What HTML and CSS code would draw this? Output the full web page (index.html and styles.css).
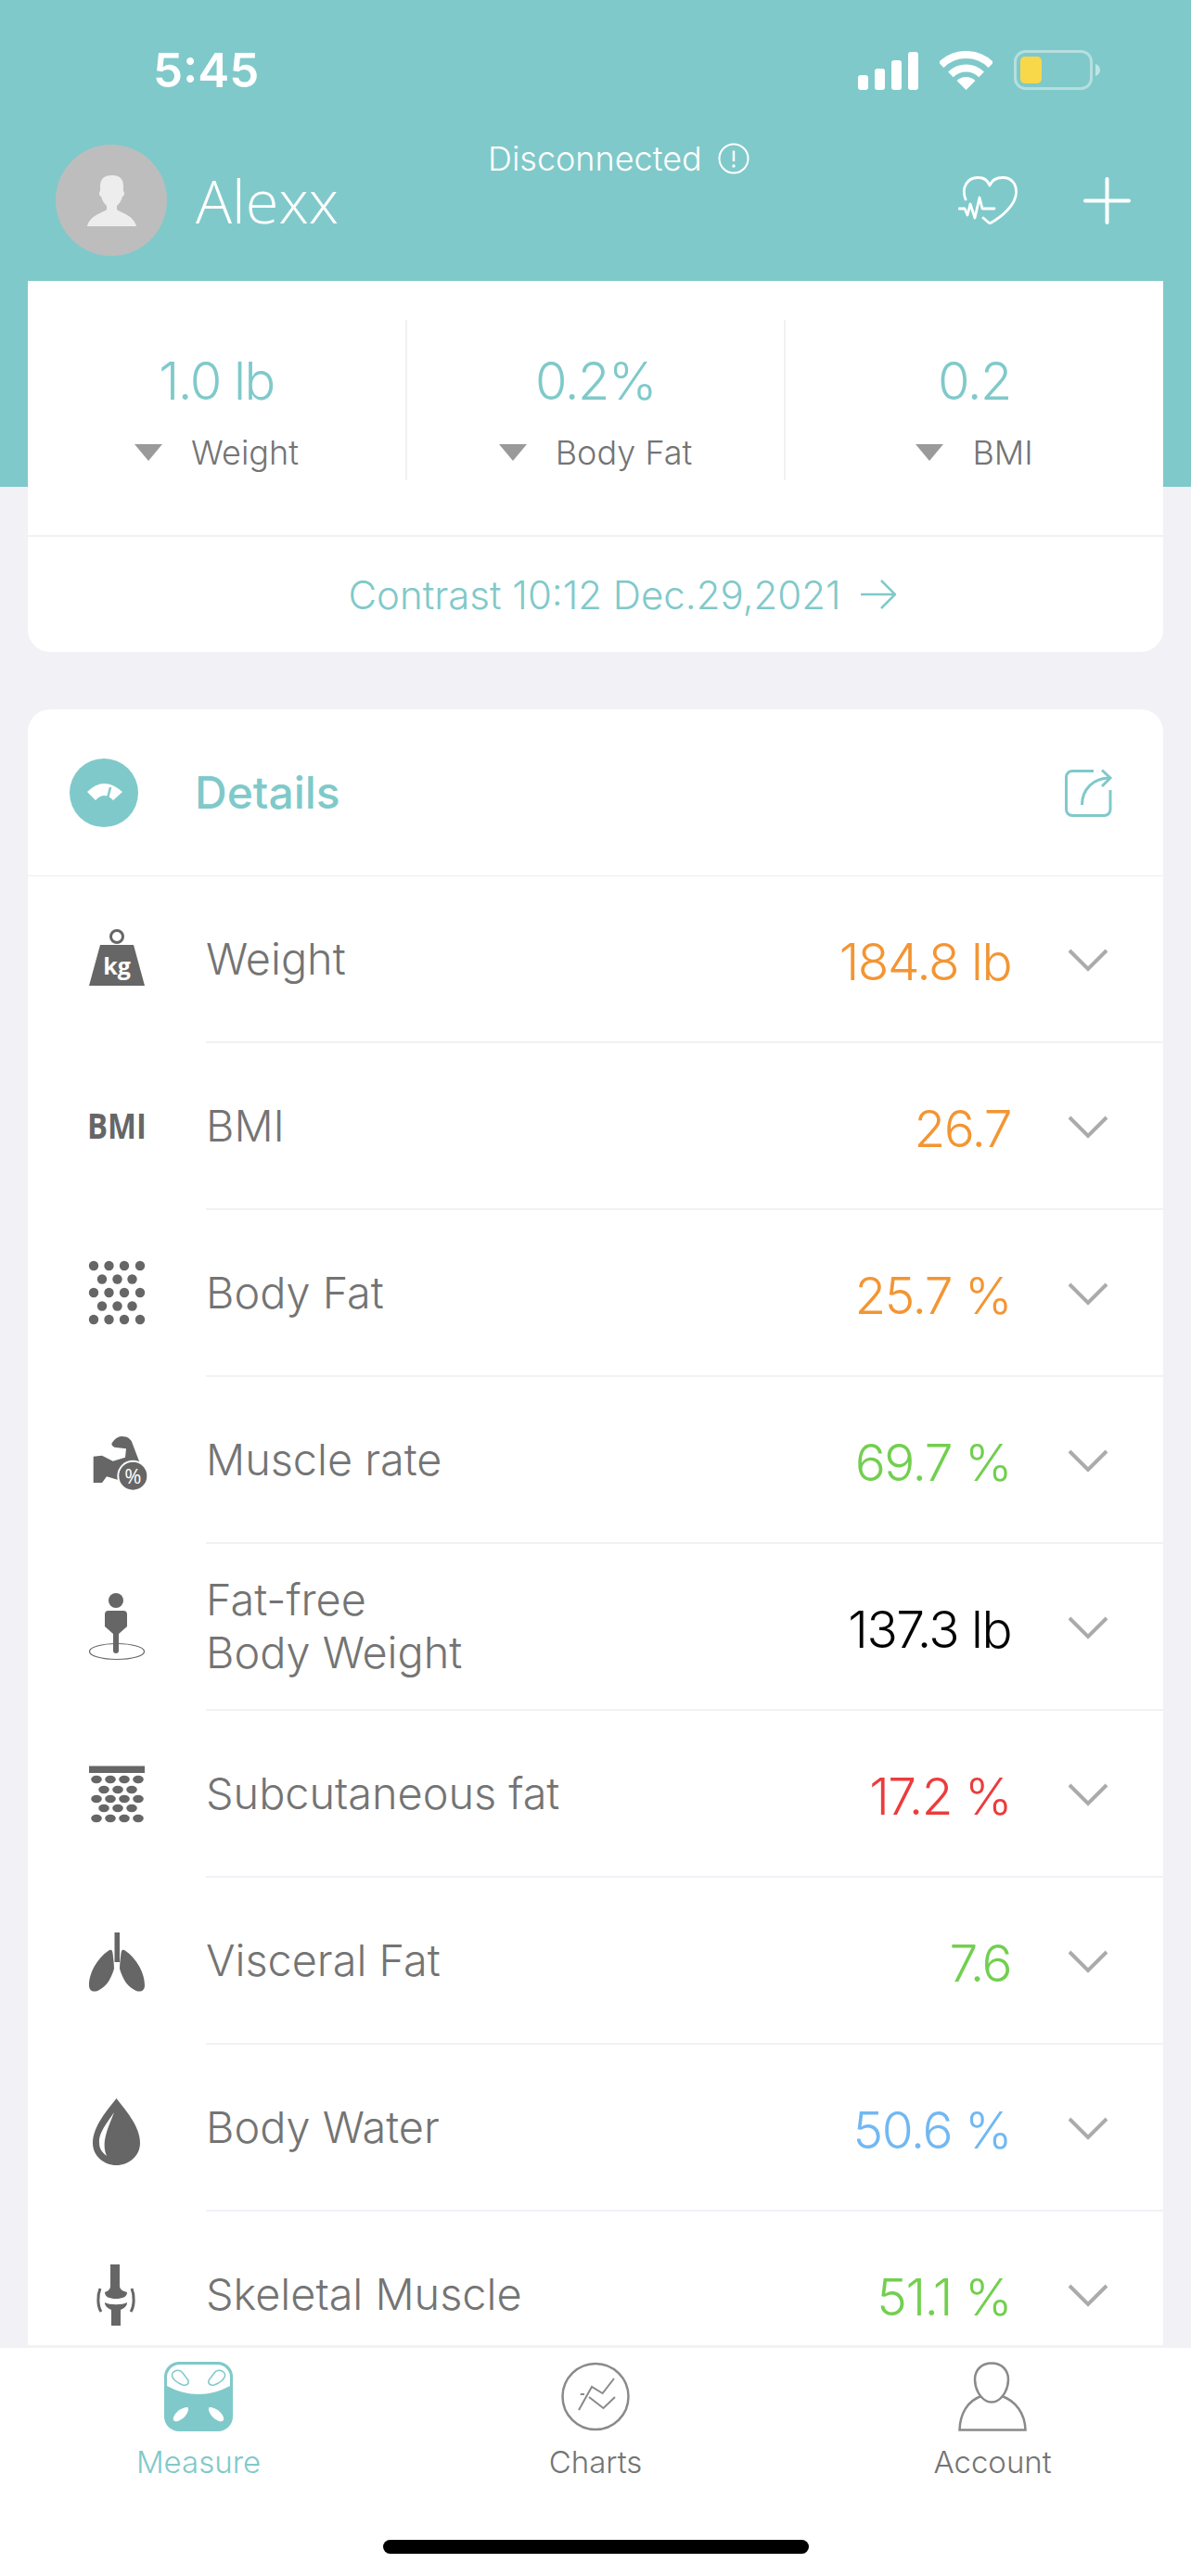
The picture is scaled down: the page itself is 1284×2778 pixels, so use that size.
FILE: index.html
```html
<!DOCTYPE html>
<html lang="en">

<head>
    <meta charset="UTF-8">
    <meta name="viewport" content="width=device-width, initial-scale=1.0">
    <title>Measure</title>
    <link rel="stylesheet" href="styles.css">
</head>

<body>
    <div class="app">

        <header class="top">
            <div class="status-bar">
                <span class="clock">5:45</span>
                <svg class="signal" width="65" height="41" viewBox="0 0 65 41">
                    <rect x="0" y="25" width="11" height="16" rx="3" />
                    <rect x="18" y="18" width="11" height="23" rx="3" />
                    <rect x="36" y="9" width="11" height="32" rx="3" />
                    <rect x="54" y="0" width="11" height="41" rx="3" />
                </svg>
                <svg class="wifi" width="57" height="42" viewBox="0 0 57 42">
                    <path d="M1.6 15.1A38 38 0 0 1 55.4 15.1" fill="none" stroke="#fff" stroke-width="8" />
                    <path d="M11.9 25.4A23.5 23.5 0 0 1 45.1 25.4" fill="none" stroke="#fff" stroke-width="8" />
                    <path d="M28.5 42L18.6 32.1A14 14 0 0 1 38.4 32.1Z" fill="#fff" />
                </svg>
                <svg class="battery" width="93" height="43" viewBox="0 0 93 43">
                    <rect x="1.5" y="1.5" width="82" height="40" rx="11" fill="none" stroke="#fff" stroke-opacity=".42" stroke-width="3" />
                    <rect x="7" y="7" width="23" height="29" rx="5" fill="#f8d749" />
                    <path d="M88 15c3 1 5 3.500 5 6.500s-2 5.500-5 6.500z" fill="#fff" fill-opacity=".5" />
                </svg>
            </div>

            <div class="nav">
                <div class="user">
                    <svg class="avatar" width="120" height="120" viewBox="0 0 120 120">
                        <circle cx="60" cy="60" r="60" fill="#bdbdbd" />
                        <path d="M61 33C52 33 48 37 48 45V50C46 52 47 55 49 56C50 60 52 63 55 66V70C50 74 37 76 34 88H87C84 76 71 74 66 70V66C69 63 71 60 72 56C74 55 75 52 73 50V45C73 37 69 33 61 33Z" fill="#ededed" />
                    </svg>
                    <span class="user-name">Alexx</span>
                </div>
                <div class="link-state">
                    <span>Disconnected</span>
                    <svg width="34" height="34" viewBox="0 0 34 34">
                        <circle cx="17" cy="17" r="15.500" fill="none" stroke="#fff" stroke-width="2" />
                        <path d="M17 8.500V20" stroke="#fff" stroke-width="2.500" />
                        <circle cx="17" cy="25" r="1.700" fill="#fff" />
                    </svg>
                </div>
                <div class="actions">
                    <svg width="64" height="52" viewBox="0 0 64 52" fill="none" stroke="#fff" stroke-width="2.800" stroke-linecap="round" stroke-linejoin="round">
                        <path d="M8 25C3 12 10 1 22 1.500C28 1.500 32 5 34 10C36 5 41 1.500 48 1.500C58 1.500 63 9 62.500 18C62 31 47 44 34 51L27 45" />
                        <path d="M1 35H7L10 42L13 30L18 45L23 23L26 35H39" />
                    </svg>
                    <svg width="51" height="51" viewBox="0 0 51 51" fill="none" stroke="#fff" stroke-width="4" stroke-linecap="round">
                        <path d="M25.500 2V49M2 25.500H49" />
                    </svg>
                </div>
            </div>
        </header>

        <section class="summary">
            <div class="stats">
                <div class="stat">
                    <div class="stat-value">1.0 lb</div>
                    <div class="stat-label"><i class="down"></i>Weight</div>
                </div>
                <div class="stat">
                    <div class="stat-value">0.2%</div>
                    <div class="stat-label"><i class="down"></i>Body Fat</div>
                </div>
                <div class="stat">
                    <div class="stat-value">0.2</div>
                    <div class="stat-label"><i class="down"></i>BMI</div>
                </div>
            </div>
            <div class="contrast">
                <span>Contrast 10:12 Dec.29,2021</span>
                <svg width="38" height="32" viewBox="0 0 38 32" fill="none" stroke="#80c9ca" stroke-width="2.500">
                    <path d="M0 16H36M22 1L37 16L22 31" />
                </svg>
            </div>
        </section>

        <section class="details">
            <div class="details-head">
                <svg width="74" height="74" viewBox="0 0 74 74">
                    <circle cx="37" cy="37" r="37" fill="#80c9ca" />
                    <path d="M19 36Q37 18 57 36L47 45Q37 35 28 45Z" fill="#fff" />
                    <path d="M44 31L41 43" stroke="#80c9ca" stroke-width="2.500" />
                </svg>
                <h2>Details</h2>
                <svg class="share" width="52" height="52" viewBox="0 0 52 52" fill="none" stroke="#80c9ca" stroke-width="3">
                    <path d="M32 2.500H9A6.500 6.500 0 0 0 2.500 9V44A6.500 6.500 0 0 0 9 50.500H43.500A6.500 6.500 0 0 0 50 44V23" />
                    <path d="M19.500 39C19.500 22 32 10 49 10M41 1.500L50 10L41 19" />
                </svg>
            </div>

            <div class="row">
                <svg class="row-icon" viewBox="0 0 70 84">
                    <circle cx="32" cy="17" r="6.500" fill="none" stroke="#666" stroke-width="3" />
                    <path d="M14 26H50L62 70H2Z" />
                    <text class="kg" x="32" y="58" text-anchor="middle">kg</text>
                </svg>
                <div class="row-main">
                    <span class="row-name">Weight</span>
                    <span class="row-value orange">184.8 lb</span>
                    <svg class="chevron" width="44" height="26" viewBox="0 0 44 26"><path d="M2 3L22 23L42 3" /></svg>
                </div>
            </div>

            <div class="row">
                <svg class="row-icon" viewBox="0 0 70 84">
                    <text class="bmi" x="0" y="55" textLength="64" lengthAdjust="spacingAndGlyphs">BMI</text>
                </svg>
                <div class="row-main">
                    <span class="row-name">BMI</span>
                    <span class="row-value orange">26.7</span>
                    <svg class="chevron" width="44" height="26" viewBox="0 0 44 26"><path d="M2 3L22 23L42 3" /></svg>
                </div>
            </div>

            <div class="row">
                <svg class="row-icon" viewBox="0 0 70 84">
                    <circle cx="7" cy="12" r="5.200" /><circle cx="23.500" cy="12" r="5.200" /><circle cx="40" cy="12" r="5.200" /><circle cx="57" cy="12" r="5.200" />
                    <circle cx="16" cy="26.500" r="5.200" /><circle cx="32.500" cy="26.500" r="5.200" /><circle cx="48.500" cy="26.500" r="5.200" />
                    <circle cx="7" cy="41" r="5.200" /><circle cx="23.500" cy="41" r="5.200" /><circle cx="40" cy="41" r="5.200" /><circle cx="57" cy="41" r="5.200" />
                    <circle cx="16" cy="55.500" r="5.200" /><circle cx="32.500" cy="55.500" r="5.200" /><circle cx="48.500" cy="55.500" r="5.200" />
                    <circle cx="7" cy="70" r="5.200" /><circle cx="23.500" cy="70" r="5.200" /><circle cx="40" cy="70" r="5.200" /><circle cx="57" cy="70" r="5.200" />
                </svg>
                <div class="row-main">
                    <span class="row-name">Body Fat</span>
                    <span class="row-value orange">25.7 %</span>
                    <svg class="chevron" width="44" height="26" viewBox="0 0 44 26"><path d="M2 3L22 23L42 3" /></svg>
                </div>
            </div>

            <div class="row">
                <svg class="row-icon" viewBox="0 0 70 84">
                    <path d="M6.700 37.700L16 36.700L27.700 42.700L41 38.700L42 29.300L29.300 27.700C26 26 26 23 27 22.700C31 17 35 16 37.700 16C44 16 46 19 47.700 21L56 42.700L45 66L32.700 62.700L21 59.300L16 66H6.700Z" />
                    <circle cx="49.300" cy="58.700" r="17" fill="#fff" />
                    <circle cx="49.300" cy="58.700" r="15" />
                    <text class="pct" x="49.300" y="66.500" text-anchor="middle">%</text>
                </svg>
                <div class="row-main">
                    <span class="row-name">Muscle rate</span>
                    <span class="row-value green">69.7 %</span>
                    <svg class="chevron" width="44" height="26" viewBox="0 0 44 26"><path d="M2 3L22 23L42 3" /></svg>
                </div>
            </div>

            <div class="row">
                <svg class="row-icon" viewBox="0 0 70 84">
                    <ellipse cx="32" cy="68" rx="29.500" ry="8.500" fill="none" stroke="#666" stroke-width="1.200" />
                    <circle cx="31" cy="13" r="8" />
                    <path d="M23 24H39A4 4 0 0 1 43 28V41L34 49V67A3 3 0 0 1 28 67V49L19 41V28A4 4 0 0 1 23 24Z" />
                </svg>
                <div class="row-main">
                    <span class="row-name">Fat-free<br>Body Weight</span>
                    <span class="row-value black">137.3 lb</span>
                    <svg class="chevron" width="44" height="26" viewBox="0 0 44 26"><path d="M2 3L22 23L42 3" /></svg>
                </div>
            </div>

            <div class="row">
                <svg class="row-icon" viewBox="0 0 70 84">
                    <rect x="2" y="11.500" width="60" height="7.500" />
                    <ellipse cx="10" cy="26" rx="5.800" ry="4.200" /><ellipse cx="25" cy="26" rx="5.800" ry="4.200" /><ellipse cx="40" cy="26" rx="5.800" ry="4.200" /><ellipse cx="55" cy="26" rx="5.800" ry="4.200" />
                    <ellipse cx="18" cy="37" rx="5.800" ry="4.200" /><ellipse cx="33" cy="37" rx="5.800" ry="4.200" /><ellipse cx="48" cy="37" rx="5.800" ry="4.200" />
                    <ellipse cx="10" cy="47" rx="5.800" ry="4.200" /><ellipse cx="25" cy="47" rx="5.800" ry="4.200" /><ellipse cx="40" cy="47" rx="5.800" ry="4.200" /><ellipse cx="55" cy="47" rx="5.800" ry="4.200" />
                    <ellipse cx="18" cy="57" rx="5.800" ry="4.200" /><ellipse cx="33" cy="57" rx="5.800" ry="4.200" /><ellipse cx="48" cy="57" rx="5.800" ry="4.200" />
                    <ellipse cx="10" cy="68" rx="5.800" ry="4.200" /><ellipse cx="25" cy="68" rx="5.800" ry="4.200" /><ellipse cx="40" cy="68" rx="5.800" ry="4.200" /><ellipse cx="55" cy="68" rx="5.800" ry="4.200" />
                </svg>
                <div class="row-main">
                    <span class="row-name">Subcutaneous fat</span>
                    <span class="row-value red">17.2 %</span>
                    <svg class="chevron" width="44" height="26" viewBox="0 0 44 26"><path d="M2 3L22 23L42 3" /></svg>
                </div>
            </div>

            <div class="row">
                <svg class="row-icon" viewBox="0 0 70 84">
                    <rect x="29.500" y="11" width="5.500" height="32" />
                    <path d="M24 30C14 36 2 52 2 68C2 75 8 76 13 73C22 68 26 60 29 50C29 45 28 38 27.500 33C27 30 26 29 24 30Z" />
                    <path d="M40 30C50 36 62 52 62 68C62 75 56 76 51 73C42 68 38 60 35 50C35 45 36 38 36.500 33C37 30 38 29 40 30Z" />
                </svg>
                <div class="row-main">
                    <span class="row-name">Visceral Fat</span>
                    <span class="row-value green">7.6</span>
                    <svg class="chevron" width="44" height="26" viewBox="0 0 44 26"><path d="M2 3L22 23L42 3" /></svg>
                </div>
            </div>

            <div class="row">
                <svg class="row-icon" viewBox="0 0 70 84">
                    <path d="M31.500 10C22 22 6 40 6 58C6 72 18 82 31.500 82C45 82 57 72 57 58C57 40 41 22 31.500 10Z" />
                    <path d="M29 25C20 38 12 48 13 58C13 65 17 69 21 72C18 65 18 58 20 50C22 42 26 33 29 25Z" fill="#fff" />
                </svg>
                <div class="row-main">
                    <span class="row-name">Body Water</span>
                    <span class="row-value blue">50.6 %</span>
                    <svg class="chevron" width="44" height="26" viewBox="0 0 44 26"><path d="M2 3L22 23L42 3" /></svg>
                </div>
            </div>

            <div class="row">
                <svg class="row-icon" viewBox="0 0 70 84">
                    <path d="M25 9H35V32C35 36 39 38 43 39C43 44 38 46 31 46C24 46 19 44 19 39C22 38 25 36 25 32Z" />
                    <path d="M19 50C24 53 38 53 43 50C43 54 40 56 36 58V75H26V58C22 56 19 54 19 50Z" />
                    <path d="M14 35C11 42 11 54 15 60M48 35C51 42 51 54 47 60" fill="none" stroke="#666" stroke-width="3" />
                </svg>
                <div class="row-main">
                    <span class="row-name">Skeletal Muscle</span>
                    <span class="row-value green">51.1 %</span>
                    <svg class="chevron" width="44" height="26" viewBox="0 0 44 26"><path d="M2 3L22 23L42 3" /></svg>
                </div>
            </div>
        </section>

        <nav class="tabs">
            <div class="tab-list">
                <div class="tab active">
                    <svg width="74" height="75" viewBox="0 0 74 75">
                        <rect width="74" height="75" rx="16" fill="#80c9ca" />
                        <path d="M3 17A14 14 0 0 1 17 3H57A14 14 0 0 1 71 17V26C60 32 48 35 37 35C26 35 14 32 3 26Z" fill="#fff" />
                        <g fill="#fff" stroke="#80c9ca" stroke-width="1.500">
                            <path d="M10 11C13 8 18 9 20 12L26 20C27 24 24 26 20 25C14 23 8 18 8.500 14C8.500 13 9 12 10 11Z" />
                            <path d="M64 11C61 8 56 9 54 12L48 20C47 24 50 26 54 25C60 23 66 18 65.500 14C65.500 13 65 12 64 11Z" />
                        </g>
                        <g fill="#fff">
                            <path d="M25 49C19 49 12 54 10 60C9 64 12 65 15 64C20 62 25 57 26 52C26 50 26 49 25 49Z" />
                            <path d="M49 49C55 49 62 54 64 60C65 64 62 65 59 64C54 62 49 57 48 52C48 50 48 49 49 49Z" />
                        </g>
                    </svg>
                    <span>Measure</span>
                </div>
                <div class="tab">
                    <svg width="74" height="75" viewBox="0 0 74 75" fill="none" stroke="#8a8a8a" stroke-width="2.500">
                        <circle cx="37" cy="37.500" r="35.500" />
                        <path d="M19 52L33 27L44.600 34L57 18" stroke-width="2" />
                        <path d="M20.700 35H25M30 38L45.500 50L58 38" stroke-width="2" />
                    </svg>
                    <span>Charts</span>
                </div>
                <div class="tab">
                    <svg width="74" height="75" viewBox="0 0 74 75" fill="none" stroke="#8a8a8a" stroke-width="2.500">
                        <path d="M36 1.500C25 1.500 18 9 18 19C18 29 23 38 30 42C33 44 39 44 42 42C49 38 54 29 54 19C54 9 47 1.500 36 1.500Z" />
                        <path d="M25 37C10 42 2 56 1.500 73.500H72.500C72 56 62 42 47 37" />
                    </svg>
                    <span>Account</span>
                </div>
            </div>
            <div class="home-bar"></div>
        </nav>

    </div>
</body>

</html>
```

FILE: styles.css
```css
* {
    margin: 0;
    padding: 0;
    box-sizing: border-box;
}

html,
body {
    width: 1284px;
    height: 2778px;
    overflow: hidden;
}

body {
    background-color: #f1f1f6;
    font-family: "Inter", "Liberation Sans", sans-serif;
    color: #747474;
}

.app {
    display: flex;
    flex-direction: column;
    height: 2778px;
}

/* teal header */
.top {
    flex: none;
    height: 525px;
    padding-top: 54px;
    background-color: #80c9ca;
    color: #fff;
}

.status-bar {
    display: flex;
    align-items: center;
    height: 43px;
    padding-left: 165px;
}

.clock {
    font-size: 51px;
    font-weight: 600;
    line-height: 43px;
    width: 760px;
}

.signal {
    fill: #fff;
    margin-top: 2px;
}

.wifi {
    margin-left: 23px;
}

.battery {
    margin-left: 23px;
}

.nav {
    display: flex;
    align-items: flex-start;
    margin-top: 59px;
    padding: 0 65px 0 60px;
}

.user {
    display: flex;
    align-items: center;
    width: 466px;
}

.user-name {
    font-family: "Open Sans", sans-serif;
    font-size: 65px;
    font-weight: 300;
    margin-left: 31px;
}

.link-state {
    display: flex;
    align-items: center;
    gap: 17px;
    margin-top: -2px;
    font-size: 36px;
    font-weight: 300;
    line-height: 34px;
}

.actions {
    display: flex;
    align-items: center;
    gap: 71px;
    margin-left: auto;
    margin-top: 34px;
}

/* summary card */
.summary {
    flex: none;
    height: 400px;
    margin: -222px 30px 0;
    background-color: #fff;
    border-radius: 0 0 24px 24px;
}

.stats {
    display: grid;
    grid-template-columns: 409px 408px 407px;
    height: 276px;
    padding-top: 42px;
    border-bottom: 2px solid #f1f1f4;
}

.stat {
    display: flex;
    flex-direction: column;
    align-items: center;
    height: 173px;
    border-right: 2px solid #f1f1f4;
}

.stat:last-child {
    border-right: none;
}

.stat-value {
    font-size: 56px;
    font-weight: 300;
    letter-spacing: -1.5px;
    line-height: 80px;
    margin-top: 26px;
    color: #80c9ca;
}

.stat-label {
    display: flex;
    align-items: center;
    gap: 31px;
    font-size: 36px;
    font-weight: 300;
    line-height: 44px;
    margin-top: 15px;
}

.down {
    width: 0;
    height: 0;
    border-left: 15px solid transparent;
    border-right: 15px solid transparent;
    border-top: 18px solid #9a9a9a;
}

.contrast {
    display: flex;
    align-items: center;
    justify-content: center;
    gap: 21px;
    height: 124px;
    padding-left: 57px;
    font-size: 42px;
    font-weight: 300;
    color: #80c9ca;
}

/* details list */
.details {
    flex: 1;
    min-height: 0;
    margin: 62px 30px 0;
    overflow: hidden;
    background-color: #fff;
    border-radius: 24px 24px 0 0;
}

.details-head {
    display: flex;
    align-items: center;
    height: 180px;
    padding: 0 55px 0 45px;
    border-bottom: 1px solid #efeff2;
}

.details-head h2 {
    font-size: 48px;
    font-weight: 500;
    margin-left: 61px;
    color: #80c9ca;
}

.share {
    margin-left: auto;
}

.row {
    display: flex;
    align-items: center;
    height: 180px;
    padding-left: 64px;
}

.row-icon {
    flex: none;
    width: 70px;
    height: 84px;
    overflow: visible;
    fill: #666;
}

.kg {
    font-family: "Open Sans", sans-serif;
    font-size: 25px;
    font-weight: 700;
    fill: #fff;
}

.bmi {
    font-family: "Open Sans", sans-serif;
    font-size: 38px;
    font-weight: 700;
}

.pct {
    font-family: "Open Sans", sans-serif;
    font-size: 22px;
    fill: #fff;
}

.row-main {
    display: flex;
    align-items: center;
    flex: 1;
    height: 100%;
    margin-left: 58px;
    padding-right: 59px;
    border-bottom: 2px solid #f1f1f6;
}

.row-name {
    font-size: 46.8px;
    font-weight: 300;
    line-height: 57px;
}

.row-value {
    font-size: 55px;
    font-weight: 300;
    letter-spacing: -1.5px;
    margin-left: auto;
    padding-top: 5px;
}

.chevron {
    flex: none;
    margin-top: 2px;
    margin-left: 61px;
    fill: none;
    stroke: #ababab;
    stroke-width: 4;
}

.orange {
    color: #f39533;
}

.green {
    color: #72cf4f;
}

.black {
    color: #000;
}

.red {
    color: #ec3c3c;
}

.blue {
    color: #72b8f2;
}

/* bottom tabs */
.tabs {
    flex: none;
    height: 249px;
    padding-top: 15px;
    background-color: #fff;
    border-top: 3px solid #f1f1f6;
}

.tab-list {
    display: grid;
    grid-template-columns: repeat(3, 1fr);
}

.tab {
    display: flex;
    flex-direction: column;
    align-items: center;
    font-size: 33px;
    font-weight: 300;
    line-height: 40px;
}

.tab span {
    margin-top: 13px;
}

.tab.active {
    color: #80c9ca;
}

.home-bar {
    width: 459px;
    height: 15px;
    margin: 64px auto 0;
    border-radius: 8px;
    background-color: #000;
}
```
